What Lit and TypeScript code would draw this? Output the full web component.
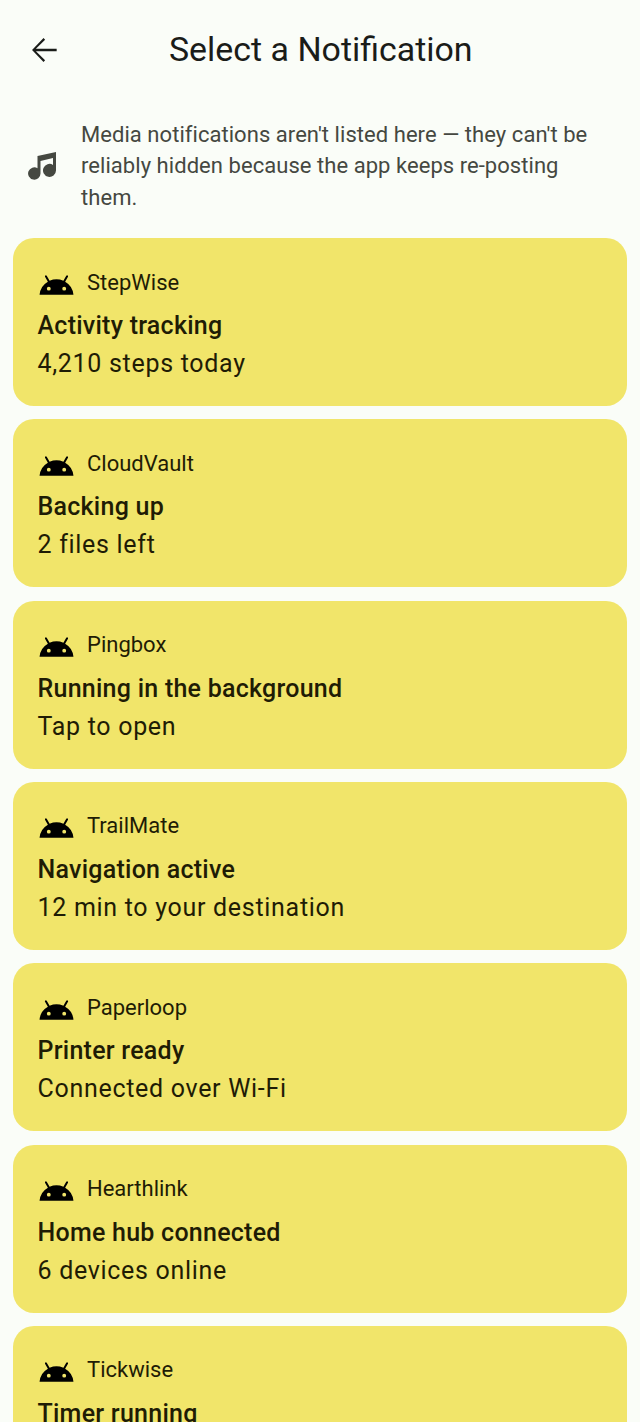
import { LitElement, html, css, svg } from "lit";
import { customElement } from "lit/decorators.js";

const items = [
  ["StepWise", "Activity tracking", "4,210 steps today"],
  ["CloudVault", "Backing up", "2 files left"],
  ["Pingbox", "Running in the background", "Tap to open"],
  ["TrailMate", "Navigation active", "12 min to your destination"],
  ["Paperloop", "Printer ready", "Connected over Wi-Fi"],
  ["Hearthlink", "Home hub connected", "6 devices online"],
  ["Tickwise", "Timer running", ""],
];

const androidIcon = svg`<path d="M17.6 11.48 19.44 8.3a.63.63 0 0 0-1.09-.63l-1.88 3.24a11.43 11.43 0 0 0-8.94 0L5.65 7.67a.63.63 0 0 0-1.09.63L6.4 11.48A10.81 10.81 0 0 0 1 20h22a10.81 10.81 0 0 0-5.4-8.52M7 17.25A1.25 1.25 0 1 1 8.25 16 1.25 1.25 0 0 1 7 17.25m10 0A1.25 1.25 0 1 1 18.25 16 1.25 1.25 0 0 1 17 17.25Z"/>`;

@customElement("app-root")
export class AppRoot extends LitElement {
  static styles = css`
    :host {
      display: block;
      width: 640px;
      height: 1422px;
      overflow: hidden;
      background: #fafdf8;
      font-family: Roboto, "Noto Sans", sans-serif;
      color: #1c1c17;
    }
    .bar {
      display: flex;
      align-items: center;
      height: 100px;
      padding-left: 25px;
    }
    .back {
      width: 38px;
      height: 38px;
      fill: #1a1c19;
      flex: none;
    }
    .title {
      flex: none;
      margin: 0 0 2px 106px;
      font-size: 33.9px;
      font-weight: 400;
      color: #1a1c19;
    }
    .info {
      display: flex;
      align-items: center;
      padding: 19px 40px 25px 28px;
      height: 138px;
      box-sizing: border-box;
    }
    .music {
      width: 28px;
      height: 28px;
      fill: #454841;
      flex: none;
    }
    .info p {
      margin: 0 0 0 25px;
      font-size: 22px;
      line-height: 31.5px;
      letter-spacing: 0.05px;
      color: #454841;
    }
    .list {
      display: flex;
      flex-direction: column;
      gap: 13.33px;
      padding: 0 13px;
    }
    .card {
      height: 168px;
      flex: none;
      box-sizing: border-box;
      background: #f1e56a;
      border-radius: 21px;
      padding: 26px 24.5px 0;
    }
    .app {
      display: flex;
      align-items: center;
      height: 36px;
      font-size: 22px;
      color: #1f1c05;
    }
    .app svg {
      width: 37px;
      height: 37px;
      fill: #000;
      margin-right: 12.5px;
      flex: none;
    }
    .name {
      font-size: 25px;
      font-weight: 500;
      line-height: 38px;
      margin-top: 7px;
      letter-spacing: 0.25px;
      color: #1f1c05;
    }
    .text {
      font-size: 25px;
      line-height: 37px;
      letter-spacing: 0.7px;
      color: #1f1c05;
    }
  `;

  render() {
    return html`
      <div class="bar">
        <svg class="back" viewBox="0 0 24 24"><path d="M20 11.25H6.9l5.8-5.8-1-1L4.45 12l7.25 7.55 1-1-5.8-5.8H20z"/></svg>
        <div class="title">Select a Notification</div>
      </div>
      <div class="info">
        <svg class="music" viewBox="0 0 28 28"><path d="M9.5 4 28 0V18.5A6.5 6.5 0 1 1 25 12.9V6L12.5 9V21.5A6.2 6.2 0 1 1 9.5 16.2Z"/></svg>
        <p>Media notifications aren't listed here — they can't be reliably hidden because the app keeps re-posting them.</p>
      </div>
      <div class="list">
        ${items.map(
          ([app, name, text]) => html`
            <div class="card">
              <div class="app">
                <svg viewBox="0 0 24 24">${androidIcon}</svg>
                <span>${app}</span>
              </div>
              <div class="name">${name}</div>
              ${text ? html`<div class="text">${text}</div>` : ""}
            </div>
          `
        )}
      </div>
    `;
  }
}
